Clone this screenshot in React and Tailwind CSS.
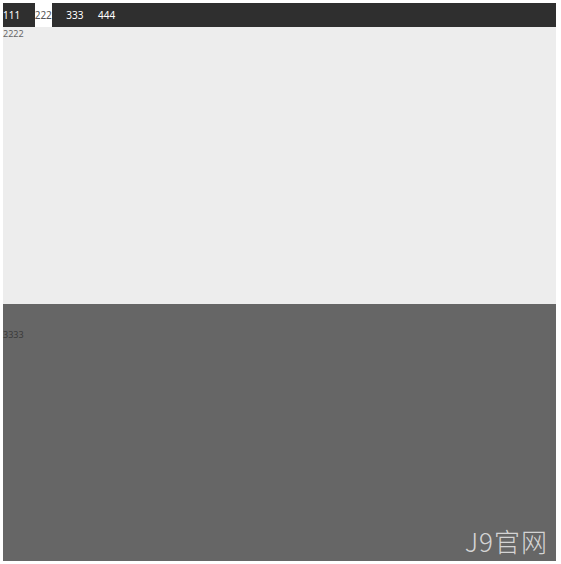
export default function App() {
  const tabs = ["111", "222", "333", "444"];
  const active = 1;

  return (
    <div className="relative w-[561px] h-[564px] bg-white p-[3px] font-['Noto_Sans','Noto_Sans_CJK_SC',sans-serif]">
      <div className="flex flex-col w-[553px] h-[558px]">
        {/* top tabs */}
        <div className="flex h-[24px] bg-[#2f2f2f] items-stretch">
          {tabs.map((t, i) => (
            <div
              key={t}
              className={`flex items-center mr-[14.5px] text-[10px] leading-none ${
                i === active ? "bg-white text-[#555]" : "text-white"
              }`}
            >
              {t}
            </div>
          ))}
        </div>

        {/* panel 2 */}
        <div className="h-[277px] bg-[#ededed] text-[9px] leading-[12px] text-[#666] pt-[1px]">2222</div>

        {/* panel 3 */}
        <div className="flex-1 bg-[#666666] text-[9px] leading-[12px] text-[#3a3a3a] pt-[25px]">3333</div>
      </div>

      {/* watermark */}
      <div className="absolute right-[13px] bottom-[10px] text-[26px] leading-none text-[#d4d4d4] tracking-[1px] font-['Noto_Sans_CJK_SC',sans-serif] font-light">
        J9官网
      </div>
    </div>
  );
}
